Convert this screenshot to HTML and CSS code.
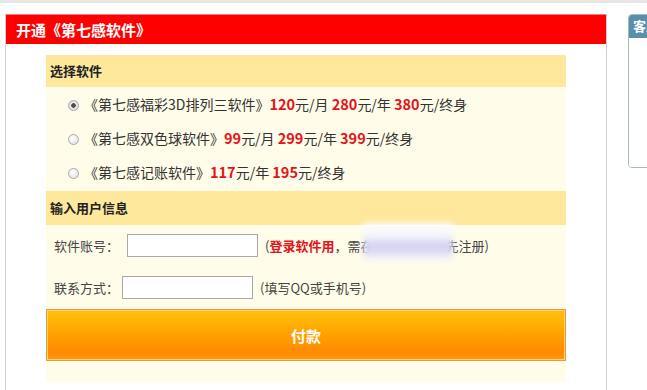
FILE: index.html
```html
<!DOCTYPE html>
<html>
<head>
<meta charset="utf-8">
<title>开通《第七感软件》</title>
<link rel="stylesheet" href="styles.css">
</head>
<body>
    <div id="TopLine"></div>
    <div id="Page">
        <div id="Main">
            <div id="MainTitle">开通《第七感软件》</div>
            <div class="Panel">
                <div class="Head">选择软件</div>
                <div class="Soft">
                    <label class="Item"><input type="radio" name="soft" checked>《第七感福彩3D排列三软件》<b>120</b>元/月 <b>280</b>元/年 <b>380</b>元/终身</label>
                    <label class="Item"><input type="radio" name="soft">《第七感双色球软件》<b>99</b>元/月 <b>299</b>元/年 <b>399</b>元/终身</label>
                    <label class="Item"><input type="radio" name="soft">《第七感记账软件》<b>117</b>元/年 <b>195</b>元/终身</label>
                </div>
                <div class="Head">输入用户信息</div>
                <div class="Form">
                    <div class="Row">
                        <span class="Label">软件账号：</span><input type="text" class="Box">
                        <span class="Note">(<em>登录软件用</em>，需在<span class="Blur"></span>先注册)</span>
                    </div>
                    <div class="Row">
                        <span class="Label Short">联系方式：</span><input type="text" class="Box">
                        <span class="Note">(填写QQ或手机号)</span>
                    </div>
                    <button type="button" id="PayBtn">付款</button>
                </div>
            </div>
        </div>
        <div id="Side">
            <div class="SideTitle">客服</div>
            <div class="SideBody"></div>
        </div>
    </div>
</body>
</html>
```

FILE: styles.css
```css
html,body{margin:0;padding:0;background:#fff;overflow:hidden;}
body{width:647px;height:390px;font-family:"Noto Sans CJK SC","Liberation Sans",sans-serif;font-size:13px;color:#333;}
#TopLine{height:3px;background:#e6e6e6;}
#Page{display:flex;align-items:flex-start;margin-top:11px;padding-left:5px;}
#Main{width:600px;height:380px;border-left:1px solid #d0d0d0;border-right:1px solid #d0d0d0;flex-shrink:0;}
#MainTitle{height:30px;line-height:29px;padding-left:10px;background:#ff0000;border-top:1px solid #f08080;box-sizing:border-box;color:#fff;font-size:15px;font-weight:bold;}
.Panel{margin:11px 40px 0;background:#fffdea;padding-bottom:21px;}
.Head{padding-left:4px;background:#fee89c;font-weight:bold;font-size:13px;color:#222;}
.Panel > .Head:first-child{height:32px;line-height:32px;}
.Soft + .Head{height:34px;line-height:34px;}
.Soft{padding-bottom:2px;}
.Item{display:block;height:34px;line-height:34px;padding-left:22px;font-size:14px;color:#333;white-space:nowrap;}
.Item b{color:#e3141c;font-size:14.5px;}
.Item input{appearance:none;-webkit-appearance:none;width:11px;height:11px;margin:0 5px 0 0;vertical-align:-1px;border:1px solid #a8a8a8;border-radius:50%;background:radial-gradient(circle at 40% 35%,#fff 0,#e4e4e4 80%);box-sizing:border-box;}
.Item input:checked{background:radial-gradient(circle,#444 0,#555 2px,#eaeaea 2.6px,#d8d8d8 100%);}
.Form{padding:9px 0 0;}
.Row{display:flex;align-items:center;height:23px;margin-bottom:19px;padding-left:8px;white-space:nowrap;}
.Row + .Row{margin-bottom:10px;}
.Label{color:#444;margin-right:8px;}
.Label.Short{margin-right:3px;}
.Box{width:131px;height:23px;box-sizing:border-box;border:1px solid #a9a9a9;background:#fff;padding:0 3px;margin:0;}
.Note{margin-left:7px;color:#444;}
.Note em{font-style:normal;color:#e3141c;font-weight:bold;}
.Blur{display:inline-block;width:90px;height:38px;margin:0 -8px 0 -10px;vertical-align:-14px;background:linear-gradient(#fdfdfd 0,#f6f5fb 35%,#cfcdf0 60%,#e9e7f5 85%,#fbfbfd 100%);filter:blur(3px);position:relative;top:-4px;}
#PayBtn{display:block;width:100%;height:52px;margin:0;border:1px solid #e8974a;box-shadow:inset 0 0 0 1px #ffd26a;background:linear-gradient(#ffc20e 0,#ffa700 40%,#ff8a00 85%,#ff9a10 100%);color:#fff;font-family:inherit;font-size:15px;font-weight:bold;}
#Side{margin-left:21px;width:100px;height:152px;border:1px solid #a8b7c4;border-radius:4px;overflow:hidden;flex-shrink:0;}
.SideTitle{height:23px;line-height:22px;padding-left:4px;background:#5b8ea9;color:#fff;font-weight:bold;font-size:13px;}
.SideBody{height:129px;background:#fff;}
```
